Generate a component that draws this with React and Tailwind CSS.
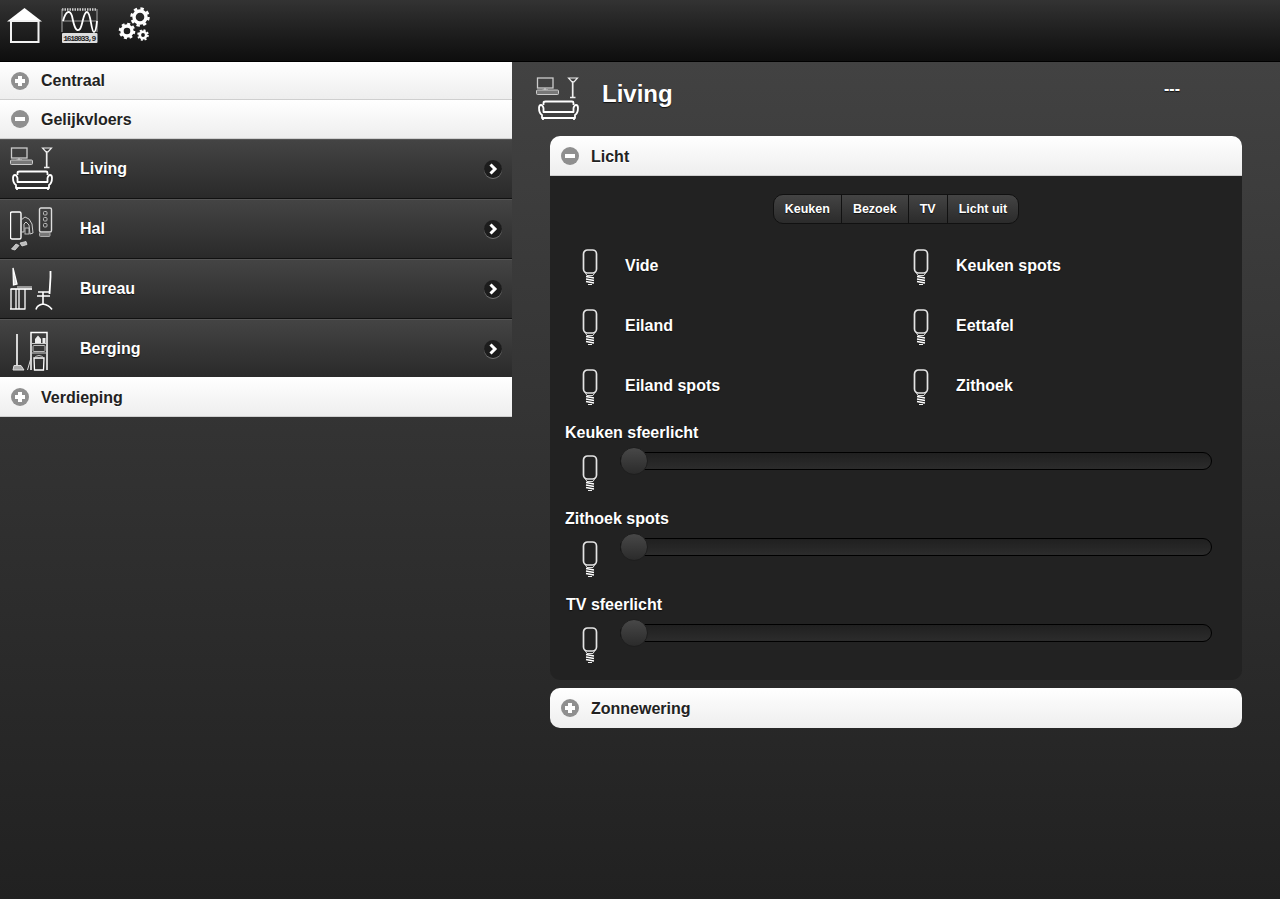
import { useState } from "react";

const FONT = "font-['Liberation_Sans',Arial,sans-serif]";

function HomeIcon() {
	return (
		<svg width="36" height="38" viewBox="0 0 36 38" className="block">
			<path d="M17.5 1 L35 14.5 H0 Z" fill="#fff" />
			<rect x="4" y="14" width="27.5" height="21" fill="none" stroke="#f2f2f2" strokeWidth="2" />
		</svg>
	);
}

function MeterIcon() {
	return (
		<svg width="38" height="38" viewBox="0 0 38 38" className="block">
			<path d="M1 1.5 H36" stroke="#ccc" strokeWidth="2.5" strokeDasharray="1.5 1" fill="none" />
			<path d="M1 1 V24 M36 1 V24" stroke="#aaa" strokeWidth="1" fill="none" />
			<path d="M1 13 H36" stroke="#999" strokeWidth="1" fill="none" />
			<path d="M2 13 C5 2 9 2 11 8 C13 18 15 25 19 21 C22 17 22 4 26 4 C30 4 30 24 33 24 C35 24 35.5 18 36 13" stroke="#fff" strokeWidth="1.8" fill="none" />
			<rect x="1" y="25" width="35.5" height="10" rx="1" fill="#ddd" />
			<text x="18.75" y="33" textAnchor="middle" fontSize="8" fontWeight="700" fill="#222" fontFamily="Liberation Mono, monospace" textLength="33">1618033,9</text>
		</svg>
	);
}

function Gear({ cx, cy, r, w, tr, tw, dash }) {
	return (
		<g fill="none" stroke="#fff">
			<circle cx={cx} cy={cy} r={r} strokeWidth={w} />
			<circle cx={cx} cy={cy} r={tr} strokeWidth={tw} strokeDasharray={dash} />
		</g>
	);
}

function GearsIcon() {
	return (
		<svg width="36" height="38" viewBox="0 0 36 38" className="block">
			<Gear cx={23} cy={10} r={6} w={3.4} tr={8.5} tw={2.5} dash="3.4 3.3" />
			<Gear cx={10} cy={24} r={5} w={3.4} tr={7.2} tw={2.2} dash="3 2.65" />
			<Gear cx={26} cy={28} r={3.2} w={2.6} tr={4.9} tw={1.8} dash="2 1.85" />
		</svg>
	);
}

function LivingIcon() {
	return (
		<svg width="44" height="44" viewBox="0 0 44 44" className="block">
			<rect x="1.5" y="1" width="15.5" height="10" fill="none" stroke="#ccc" strokeWidth="1.3" />
			<path d="M9 11 V13 M6.5 13 H12" stroke="#ccc" strokeWidth="1.2" fill="none" />
			<rect x="0.5" y="13" width="22" height="4.5" rx="1" fill="#777" stroke="#ccc" strokeWidth="1" />
			<path d="M36.7 4 V20 M34 20.5 H39.5" stroke="#eee" strokeWidth="1.7" fill="none" />
			<path d="M32.5 1 H41.5 L38 5 H36 Z" fill="none" stroke="#eee" strokeWidth="1.2" />
			<path d="M7.5 28 V26 Q7.5 24.5 9.5 24.5 H36 Q37.5 24.5 37.5 26 V28" fill="none" stroke="#fff" strokeWidth="1.8" />
			<path d="M7.5 31 Q6.5 28 5 28 Q3 28 3 31 Q3 36 6 38 V41 H39 V38 Q42 36 42 31 Q42 28 40 28 Q38.5 28 37.5 31 V35 H7.5 Z" fill="none" stroke="#fff" strokeWidth="1.8" strokeLinejoin="round" />
			<path d="M7 41 V43 M38 41 V43" stroke="#fff" strokeWidth="1.8" />
		</svg>
	);
}

function HalIcon() {
	return (
		<svg width="44" height="44" viewBox="0 0 44 44" className="block">
			<rect x="0.5" y="5" width="10.5" height="27" rx="1.5" fill="none" stroke="#fff" strokeWidth="1.4" />
			<path d="M11 13 L15 10 L19 12 L22 17 L23 26 L20 27 L19 18 L16 15 L14 17 V25 H11" fill="none" stroke="#ccc" strokeWidth="1" />
			<rect x="15" y="21" width="4" height="6" fill="none" stroke="#bbb" strokeWidth="1" />
			<rect x="29.5" y="1" width="12" height="24" rx="1.5" fill="none" stroke="#ddd" strokeWidth="1.4" />
			<rect x="33.5" y="4.5" width="3.5" height="3.5" rx="1" fill="none" stroke="#bbb" />
			<rect x="33.5" y="10.5" width="3.5" height="3.5" rx="1" fill="none" stroke="#bbb" />
			<rect x="33.5" y="16.5" width="3.5" height="3.5" rx="1" fill="none" stroke="#bbb" />
			<rect x="29.5" y="25.5" width="10.5" height="4" rx="1" fill="#777" stroke="#aaa" />
			<path d="M1.5 42 L6 37 L9 38.5 L5 43 Z M10 36 L16 34.5 L17 37.5 L12 39 Z" fill="#bbb" stroke="#ddd" strokeWidth="0.8" />
		</svg>
	);
}

function BureauIcon() {
	return (
		<svg width="44" height="44" viewBox="0 0 44 44" className="block">
			<path d="M3 1 L7 17 L3.5 18 Z" fill="#ddd" stroke="#fff" strokeWidth="1.3" />
			<path d="M7 20 H22" stroke="#ccc" strokeWidth="1.3" />
			<path d="M0.5 22 H22" stroke="#fff" strokeWidth="1.7" />
			<path d="M1 22 V42 M6 22 V42 M9 22 V42 M15 22 V42 M0 42 H15.5" stroke="#fff" strokeWidth="1.3" fill="none" />
			<path d="M40.5 4 V10 L39.5 27" stroke="#fff" strokeWidth="1.8" fill="none" />
			<path d="M28 25 H39 M27 29 H40 M33 25 V38 M26 42.5 Q27 38 33 37 Q39 38 42 42.5" stroke="#fff" strokeWidth="1.6" fill="none" />
		</svg>
	);
}

function BergingIcon() {
	return (
		<svg width="44" height="44" viewBox="0 0 44 44" className="block">
			<path d="M7 6 V37" stroke="#fff" strokeWidth="1.6" />
			<path d="M3 42 L4 37.5 H11 L14 42 Z" fill="#aaa" stroke="#ddd" strokeWidth="1" />
			<path d="M21 42 V4.5 H37 V42" stroke="#fff" strokeWidth="1.5" fill="none" />
			<path d="M21 15.5 H37 M21 25 H37" stroke="#ccc" strokeWidth="1" />
			<path d="M25 15 V11 L28 7.5 L31 11 V15 Z M32.5 10 H35.5 V15 H32.5 Z" fill="#eee" />
			<rect x="23" y="17.5" width="12" height="6" rx="1" fill="none" stroke="#bbb" />
			<path d="M24 30 H34 L33.5 42 H24.5 Z" fill="none" stroke="#fff" strokeWidth="1.3" />
			<path d="M24 30 Q29 25 34 30" fill="none" stroke="#ccc" />
			<path d="M17.5 42 L21 30" stroke="#ddd" />
		</svg>
	);
}

function BulbIcon() {
	return (
		<svg width="16" height="36" viewBox="0 0 16 36" className="block">
			<rect x="1.5" y="1" width="13" height="23" rx="4" fill="none" stroke="#e4e4e4" strokeWidth="1.7" />
			<path d="M3.5 24 L5 26.5 H11 L12.5 24" fill="none" stroke="#ddd" strokeWidth="1" />
			<path d="M4 27.5 L12 29 M4 30 L12 31.5 M4 32.5 L12 34" stroke="#fff" strokeWidth="1.4" />
			<path d="M6 35.5 H10" stroke="#eee" strokeWidth="1" />
		</svg>
	);
}

function PlusMinus({ open }) {
	return (
		<span className="relative block h-[18px] w-[18px] shrink-0 rounded-full bg-[#8f8f8f]">
			<span className="absolute left-[4px] top-[7px] h-[4px] w-[10px] bg-white" />
			{!open && <span className="absolute left-[7px] top-[4px] h-[10px] w-[4px] bg-white" />}
		</span>
	);
}

function ChevronBadge({ className = "" }) {
	return (
		<span className={`flex h-[18px] w-[18px] items-center justify-center rounded-full bg-[#1c1c1c] shadow-[0_1px_0_rgba(255,255,255,0.3)] ${className}`}>
			<svg width="10" height="12" viewBox="0 0 10 12">
				<path d="M2.5 1.5 L7 6 L2.5 10.5" fill="none" stroke="#fff" strokeWidth="3" />
			</svg>
		</span>
	);
}

function AccordionHeader({ label, open, className = "", labelClass = "mt-[1px]" }) {
	return (
		<div className={`flex items-center gap-[12px] border-[#cfcfcf] bg-gradient-to-b from-white to-[#eeeeee] pl-[11px] text-[16px] font-bold text-[#222] [text-shadow:0_1px_0_#fff] ${className}`}>
			<PlusMinus open={open} />
			<span className={labelClass}>{label}</span>
		</div>
	);
}

const rooms = [
	{ name: "Living", icon: LivingIcon },
	{ name: "Hal", icon: HalIcon },
	{ name: "Bureau", icon: BureauIcon },
	{ name: "Berging", icon: BergingIcon },
];

const switches = ["Vide", "Keuken spots", "Eiland", "Eettafel", "Eiland spots", "Zithoek"];
const scenes = ["Keuken", "Bezoek", "TV", "Licht uit"];
const dimmers = ["Keuken sfeerlicht", "Zithoek spots", "TV sfeerlicht"];

function RoomRow({ room, last }) {
	const Icon = room.icon;
	return (
		<div className={`flex items-center bg-gradient-to-b from-[#444] to-[#2a2a2a] pl-[10px] pr-[10px] border-t border-t-[#555] ${last ? "h-[58px] pt-[2px]" : "h-[60px] border-b border-b-[#111]"}`}>
			<Icon />
			<span className={`ml-[26px] flex-1 text-[16px] font-bold text-white [text-shadow:0_1px_1px_#111] ${last ? "mb-[2px]" : ""}`}>{room.name}</span>
			<ChevronBadge className={last ? "mb-[2px]" : ""} />
		</div>
	);
}

function Slider() {
	const [value] = useState(0);
	return (
		<div className="relative mt-[-3px] ml-[22px] h-[18px] flex-1 rounded-full border border-black bg-gradient-to-b from-[#202020] to-[#2c2c2c]">
			<span
				className="absolute top-[-6px] h-[28px] w-[28px] rounded-full border border-[#1e1e1e] bg-gradient-to-b from-[#484848] to-[#2b2b2b]"
				style={{ left: `${value - 1}px` }}
			/>
		</div>
	);
}

export default function App() {
	return (
		<div className={`flex min-h-[899px] flex-col bg-[#222] ${FONT}`}>
			{/* Top bar */}
			<div className="flex h-[62px] items-start border-b border-black bg-gradient-to-b from-[#333] to-[#0e0e0e] pl-[7px] pt-[7px]">
				<HomeIcon />
				<span className="ml-[18px] mt-[1px]"><MeterIcon /></span>
				<span className="ml-[18px]"><GearsIcon /></span>
			</div>

			<div className="flex flex-1 bg-gradient-to-b from-[#424242] to-[#212121]">
				{/* Sidebar */}
				<div className="w-[512px] shrink-0">
					<AccordionHeader label="Centraal" labelClass="" className="h-[38px] border-b" />
					<AccordionHeader label="Gelijkvloers" open className="h-[39px] border-b" />
					{rooms.map((room, i) => <RoomRow key={room.name} room={room} last={i === rooms.length - 1} />)}
					<AccordionHeader label="Verdieping" labelClass="mt-[2px]" className="h-[40px] border-b" />
				</div>

				{/* Main */}
				<div className="flex-1 pl-[38px] pr-[38px]">
					<div className="ml-[-14px] flex h-[74px] items-center text-white">
						<LivingIcon />
						<h1 className="mb-[10px] ml-[22px] text-[24px] font-bold [text-shadow:0_1px_1px_#111]">Living</h1>
						<span className="mb-[20px] ml-auto mr-[62px] text-[16px] font-bold [text-shadow:0_1px_1px_#111]">---</span>
					</div>

					<AccordionHeader label="Licht" labelClass="mt-[2px]" open className="h-[40px] rounded-t-[10px] border-b pl-[11px]" />
					<div className="rounded-b-[10px] bg-[#222] px-[15px] pb-[7px] pt-[18px]">
						<div className="flex justify-center">
							<div className="flex h-[30px] rounded-[10px] border border-[#111] bg-gradient-to-b from-[#444] to-[#2b2b2b] text-[12.5px] font-bold text-white [text-shadow:0_1px_1px_#111]">
								{scenes.map((scene, i) => (
									<span
										key={scene}
										className={`flex items-center px-[11px] pt-[1px] ${i > 0 ? "border-l border-[#111]" : ""}`}>
										{scene}
									</span>
								))}
							</div>
						</div>

						<div className="mt-[11px] grid grid-cols-2">
							{switches.map((name) => (
								<div key={name} className="flex h-[60px] items-center pl-[17px]">
									<span className="mt-[4px]"><BulbIcon /></span>
									<span className="ml-[27px] mt-[1px] text-[16px] font-bold text-white [text-shadow:0_1px_1px_#111]">{name}</span>
								</div>
							))}
						</div>

						{dimmers.map((name) => (
							<div key={name} className="h-[86px] pr-[15px]">
								<div className={`h-[40px] pt-[9px] text-[16px] font-bold leading-[18px] text-white [text-shadow:0_1px_1px_#111] ${name === "TV sfeerlicht" ? "pl-[1px]" : ""}`}>{name}</div>
								<div className="flex items-start pl-[17px]">
									<BulbIcon />
									<Slider />
								</div>
							</div>
						))}
					</div>

					<AccordionHeader label="Zonnewering" className="mt-[8px] h-[40px] rounded-[10px]" />
				</div>
			</div>
		</div>
	);
}
